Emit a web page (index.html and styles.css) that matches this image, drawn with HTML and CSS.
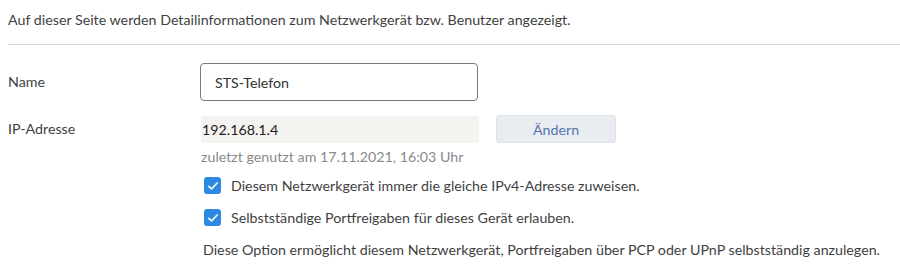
FILE: index.html
```html
<!DOCTYPE html>
<html lang="de">
<head>
  <meta charset="UTF-8" />
  <title>Netzwerkgerät</title>
  <link rel="stylesheet" href="styles.css">
</head>
<body>
  <p class="intro">Auf dieser Seite werden Detailinformationen zum Netzwerkgerät bzw. Benutzer angezeigt.</p>
  <hr class="sep">

  <div class="row row-name">
    <label class="lbl" for="name">Name</label>
    <input class="text-input" id="name" type="text" value="STS-Telefon">
  </div>

  <div class="row row-ip">
    <span class="lbl">IP-Adresse</span>
    <div class="ip-col">
      <div class="ip-line">
        <div class="ip-field">192.168.1.4</div>
        <button class="btn">Ändern</button>
      </div>
      <div class="hint">zuletzt genutzt am 17.11.2021, 16:03 Uhr</div>
    </div>
  </div>

  <div class="options">
    <label class="check"><span class="box"><svg viewBox="0 0 16 16" width="12" height="12"><path d="M2.5 8.5l3.5 3.5 7.5-8" fill="none" stroke="#fff" stroke-width="2.2" stroke-linecap="round" stroke-linejoin="round"/></svg></span>Diesem Netzwerkgerät immer die gleiche IPv4-Adresse zuweisen.</label>
    <label class="check"><span class="box"><svg viewBox="0 0 16 16" width="12" height="12"><path d="M2.5 8.5l3.5 3.5 7.5-8" fill="none" stroke="#fff" stroke-width="2.2" stroke-linecap="round" stroke-linejoin="round"/></svg></span>Selbstständige Portfreigaben für dieses Gerät erlauben.</label>
    <p class="desc">Diese Option ermöglicht diesem Netzwerkgerät, Portfreigaben über PCP oder UPnP selbstständig anzulegen.</p>
  </div>
</body>
</html>
```

FILE: styles.css
```css
body {
  margin: 0;
  padding: 0 0 0 8px;
  font-family: "Source Sans Pro", Lato, "Open Sans", sans-serif;
  font-size: 14.25px;
  color: #3f3f3f;
  background: #fff;
  overflow: hidden;
}
.intro {
  margin: 0;
  padding-top: 11px;
  line-height: 18px;
}
.sep {
  border: none;
  border-top: 1px solid #d9d9d9;
  margin: 15px 0 0 0;
}
.row {
  display: flex;
}
.lbl {
  width: 192px;
  flex: none;
  line-height: 18px;
}
.row-name {
  margin-top: 18px;
  align-items: center;
}
.text-input {
  box-sizing: border-box;
  width: 278px;
  height: 38px;
  border: 1.5px solid #7a7a7a;
  border-radius: 4px;
  padding: 0 14px;
  font: inherit;
  color: #333;
  outline: none;
}
.row-ip {
  margin-top: 15px;
}
.row-ip .lbl {
  margin-top: 4px;
}
.ip-col {
  display: flex;
  flex-direction: column;
}
.ip-line {
  display: flex;
  gap: 17px;
}
.ip-field {
  width: 277px;
  height: 27px;
  line-height: 27px;
  margin-left: 1px;
  padding-left: 1px;
  background: #f4f3f0;
  border-radius: 3px;
  color: #222;
}
.btn {
  width: 120px;
  height: 28px;
  margin-top: -1px;
  background: #e9edf2;
  border: 1px solid #dde2e9;
  border-radius: 3px;
  color: #5673ad;
  font: inherit;
  padding: 0;
}
.hint {
  margin-top: 5px;
  margin-left: 1px;
  line-height: 18px;
  color: #8a8a8a;
}
.options {
  margin-left: 196px;
  margin-top: 11px;
}
.check {
  display: flex;
  align-items: center;
  gap: 10px;
  height: 17px;
  margin-bottom: 15px;
}
.box {
  width: 17px;
  height: 17px;
  border-radius: 3px;
  background: #2e8ae0;
  display: flex;
  align-items: center;
  justify-content: center;
  flex: none;
}
.desc {
  margin: 0;
  margin-left: -1px;
  padding-top: 0;
  line-height: 18px;
}
```
